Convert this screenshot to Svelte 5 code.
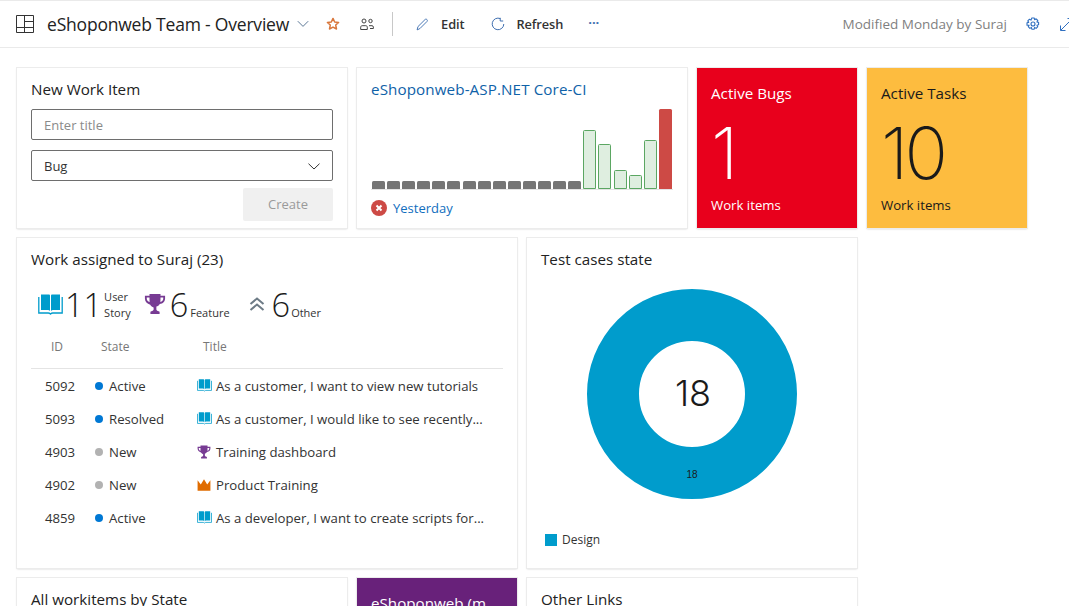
<script>
  const builds = [8, 8, 8, 8, 8, 8, 8, 8, 8, 8, 8, 8, 8, 8, 59, 45, 19, 14, 49, 80];

  function buildClass(i) {
    if (i < 14) return 'grey';
    if (i === 19) return 'red';
    return 'green';
  }

  const rows = [
    { id: 5092, state: 'Active', kind: 'story', title: 'As a customer, I want to view new tutorials' },
    { id: 5093, state: 'Resolved', kind: 'story', title: 'As a customer, I would like to see recently...' },
    { id: 4903, state: 'New', kind: 'trophy', title: 'Training dashboard' },
    { id: 4902, state: 'New', kind: 'crown', title: 'Product Training' },
    { id: 4859, state: 'Active', kind: 'story', title: 'As a developer, I want to create scripts for...' }
  ];
</script>

{#snippet book(size)}
  <svg width={size} height={size * 0.84} viewBox="0 0 25 21">
    <path d="M3 .5h7.800c.8 0 1.200.5 1.200 1.200V17c-.5-.6-1.100-1-2-1H3z" fill="#009ccc" />
    <path d="M22 .5h-7.800c-.8 0-1.200.5-1.200 1.200V17c.5-.6 1.100-1 2-1h7z" fill="#009ccc" />
    <path d="M.8 3v16h9.400c.9 0 1.600.3 2.300 1 .7-.7 1.400-1 2.300-1h9.400V3" fill="none" stroke="#009ccc" stroke-width="1.300" />
  </svg>
{/snippet}

{#snippet trophy(size)}
  <svg width={size} height={size} viewBox="0 0 24 24">
    <path d="M6 1h12v2h5v3c0 3.400-2.400 5.600-5.800 5.900-.9 1.500-2.200 2.500-3.700 2.900V18c0 .8 1 1.500 2.500 2l1 .5V23H7v-2.500l1-.5c1.500-.5 2.500-1.200 2.500-2v-2.200c-1.500-.4-2.800-1.400-3.700-2.900C3.400 11.600 1 9.400 1 6V3h5zM3 5v1c0 2 1.200 3.400 3.200 3.800C6 8.700 6 7.600 6 5zm15 0c0 2.600 0 3.700-.2 4.800C19.800 9.400 21 8 21 6V5z" fill="#773b93" fill-rule="evenodd" />
  </svg>
{/snippet}

{#snippet crown(size)}
  <svg width={size} height={size} viewBox="0 0 24 24">
    <path d="M1 4l5.500 7L12 2l5.500 9L23 4v18H1z" fill="#e06c00" />
  </svg>
{/snippet}

<div class="page">
  <header class="toolbar">
    <svg class="board" width="18" height="18" viewBox="0 0 18 18" fill="none" stroke="#333" stroke-width="1">
      <path d="M.5.5h17v17H.5zM.5 12.500h17M8.500.5v17M8.500 6.500h9" />
    </svg>
    <h1>eShoponweb Team - Overview</h1>
    <svg class="title-caret" width="12" height="8" viewBox="0 0 12 8" fill="none" stroke="#5c7896" stroke-width="1">
      <path d="M.8 1.200L6 6.400l5.200-5.200" />
    </svg>
    <svg class="star" width="14" height="14" viewBox="0 0 16 16" fill="none" stroke="#d9773c" stroke-width="1.700">
      <path d="M8 1.600l1.900 4.100 4.500.5-3.300 3 .9 4.500L8 11.500l-4 2.200.9-4.500-3.300-3 4.500-.5z" stroke-linejoin="round" />
    </svg>
    <svg class="team" width="14" height="13" viewBox="0 0 14 13" fill="none" stroke="#444" stroke-width="1">
      <circle cx="4" cy="3" r="2" /><circle cx="10.500" cy="3" r="1.700" />
      <path d="M.7 11.500V9.200c0-.9.7-1.500 1.500-1.500h3.600c.9 0 1.500.6 1.500 1.500v2.300zM9 7.700h3c.8 0 1.400.6 1.400 1.400v1.400H10" />
    </svg>
    <span class="divider"></span>
    <button class="action">
      <svg width="13" height="13" viewBox="0 0 14 14" fill="none" stroke="#3f6fb0" stroke-width="1">
        <path d="M1.200 12.800l.9-3.500 7.600-7.600c.6-.6 1.500-.6 2.100 0s.6 1.500 0 2.100l-7.600 7.600z" />
      </svg>
      Edit
    </button>
    <button class="action refresh">
      <svg width="14" height="14" viewBox="0 0 14 14" fill="none" stroke="#3f6fb0" stroke-width="1">
        <path d="M9.300 1.600a5.800 5.800 0 1 0 3.500 5.400M9.200 .8v3.200h3" />
      </svg>
      Refresh
    </button>
    <span class="more">···</span>
    <span class="modified">Modified Monday by Suraj</span>
    <svg class="gear" width="14" height="14" viewBox="0 0 14 14" fill="none" stroke="#2f6fc0" stroke-width="1.100">
      <circle cx="7" cy="7" r="2" />
      <path d="M5.800 1h2.400l.4 1.700 1.500-.9 1.700 1.700-.9 1.500 1.700.4v2.400l-1.700.4.9 1.500-1.700 1.700-1.500-.9-.4 1.700H5.800l-.4-1.700-1.500.9-1.700-1.700.9-1.500L1 8.200V5.800l1.700-.4-.9-1.500 1.700-1.700 1.500.9z" stroke-linejoin="round" />
    </svg>
    <svg class="expand" width="13" height="13" viewBox="0 0 13 13" fill="none" stroke="#2f6fc0" stroke-width="1">
      <path d="M7.500.5h5v5M12.500.5L.8 12.200M.5 7.500v5h5" />
    </svg>
  </header>

  <main class="grid">
    <section class="card new-item">
      <h2>New Work Item</h2>
      <div class="field placeholder">Enter title</div>
      <div class="field select">
        Bug
        <svg width="12" height="7" viewBox="0 0 12 7" fill="none" stroke="#333" stroke-width="1">
          <path d="M.5.7L6 6l5.500-5.300" />
        </svg>
      </div>
      <div class="create">Create</div>
    </section>

    <section class="card build">
      <h2 class="link">eShoponweb-ASP.NET Core-CI</h2>
      <div class="chart">
        {#each builds as h, i}
          <span class="bar {buildClass(i)}" style="height: {h}px"></span>
        {/each}
      </div>
      <div class="when">
        <svg width="16" height="16" viewBox="0 0 16 16">
          <circle cx="8" cy="8" r="8" fill="#cd4a45" />
          <path d="M5.500 5.500l5 5M10.500 5.500l-5 5" stroke="#fff" stroke-width="2" />
        </svg>
        <span>Yesterday</span>
      </div>
    </section>

    <section class="tile bugs">
      <h2>Active Bugs</h2>
      <div class="count">1</div>
      <div class="tile-label">Work items</div>
    </section>

    <section class="tile tasks">
      <h2>Active Tasks</h2>
      <div class="count">10</div>
      <div class="tile-label">Work items</div>
    </section>

    <section class="card assigned">
      <h2>Work assigned to Suraj (23)</h2>
      <div class="summary">
        <div class="stat story-stat">
          {@render book(25)}
          <span class="num">11</span>
          <span class="stat-label">User<br />Story</span>
        </div>
        <div class="stat feature-stat">
          {@render trophy(22)}
          <span class="num">6</span>
          <span class="stat-label">Feature</span>
        </div>
        <div class="stat other-stat">
          <svg width="16" height="14" viewBox="0 0 16 14" fill="none" stroke="#6d7b86" stroke-width="2">
            <path d="M1.500 7L8 1.500 14.500 7M1.500 13L8 7.500l6.500 5.500" />
          </svg>
          <span class="num">6</span>
          <span class="stat-label">Other</span>
        </div>
      </div>
      <div class="row head">
        <span class="c-id">ID</span>
        <span class="c-state">State</span>
        <span class="c-title">Title</span>
      </div>
      <div class="rows">
        {#each rows as r}
          <div class="row">
            <span class="c-id">{r.id}</span>
            <span class="c-state">
              <i class="dot" class:blue={r.state !== 'New'}></i>{r.state}
            </span>
            <span class="c-title">
              <span class="wi-icon">
                {#if r.kind === 'story'}
                  {@render book(15)}
                {:else if r.kind === 'trophy'}
                  {@render trophy(14)}
                {:else}
                  {@render crown(14)}
                {/if}
              </span>
              {r.title}
            </span>
          </div>
        {/each}
      </div>
    </section>

    <section class="card cases">
      <h2>Test cases state</h2>
      <div class="donut">
        <svg width="210" height="210" viewBox="0 0 210 210">
          <circle cx="105" cy="105" r="79" fill="none" stroke="#009ccc" stroke-width="52" />
        </svg>
        <span class="total">18</span>
        <span class="slice">18</span>
      </div>
      <div class="legend"><i></i>Design</div>
    </section>

    <section class="card short"><h2>All workitems by State</h2></section>
    <section class="tile purple"><h2>eShoponweb (m</h2></section>
    <section class="card short"><h2>Other Links</h2></section>
  </main>
</div>

<style>
  :global(body) {
    background: #fff;
    overflow: hidden;
  }

  .page {
    height: 606px;
    overflow: hidden;
    font-family: "Open Sans", "Noto Sans", sans-serif;
    color: #201f1e;
    border-top: 1px solid #eaeaea;
    box-sizing: border-box;
  }

  .toolbar {
    display: flex;
    align-items: center;
    height: 46px;
    padding-left: 16px;
    border-bottom: 1px solid #eaeaea;
    white-space: nowrap;
    overflow: hidden;
  }

  .board {
    flex-shrink: 0;
  }

  h1 {
    margin: 0 0 0 13px;
    font-size: 17.500px;
    font-weight: 400;
    color: #222;
    letter-spacing: -0.2px;
  }

  .title-caret {
    margin-left: 8px;
    flex-shrink: 0;
  }

  .star {
    margin-left: 17px;
    flex-shrink: 0;
  }

  .team {
    margin-left: 20px;
    flex-shrink: 0;
  }

  .divider {
    width: 1px;
    height: 24px;
    background: #c8c8c8;
    margin-left: 18px;
    flex-shrink: 0;
  }

  .action {
    display: flex;
    align-items: center;
    gap: 12px;
    margin-left: 23px;
    padding: 0;
    border: 0;
    background: none;
    font: 600 12.800px "Open Sans", sans-serif;
    color: #333;
    letter-spacing: -0.1px;
  }

  .refresh {
    margin-left: 27px;
    gap: 11px;
  }

  .more {
    margin-left: 25px;
    color: #3f6fb0;
    font-size: 13px;
    font-weight: 700;
    line-height: 1;
    margin-bottom: 3px;
  }

  .modified {
    margin-left: auto;
    font-size: 13.500px;
    color: #7f7f7f;
  }

  .gear {
    margin-left: 19px;
    flex-shrink: 0;
  }

  .expand {
    margin-left: 20px;
    margin-right: -4px;
    flex-shrink: 0;
  }

  .grid {
    display: grid;
    grid-template-columns: repeat(6, 160px);
    grid-auto-rows: 160px;
    gap: 10px;
    padding: 20px 0 0 17px;
  }

  .card,
  .tile {
    box-sizing: border-box;
    box-shadow: 0 0 0 1px #ececec, 0 1px 2px rgba(0, 0, 0, 0.2);
    min-width: 0;
  }

  .card {
    background: #fff;
    padding: 12px 14px;
  }

  h2 {
    margin: 0;
    font-size: 15.200px;
    font-weight: 400;
    line-height: 19px;
    color: #222;
  }

  .new-item,
  .build,
  .short {
    grid-column: span 2;
  }

  .field {
    box-sizing: border-box;
    height: 31px;
    margin-top: 10px;
    padding: 1px 12px 0;
    border: 1px solid #6e6e6e;
    border-radius: 2px;
    font-size: 13px;
    line-height: 28px;
    color: #333;
  }

  .field + .field {
    margin-top: 10px;
  }

  .placeholder {
    color: #8a8a8a;
  }

  .select {
    display: flex;
    justify-content: space-between;
    align-items: center;
  }

  .create {
    width: 90px;
    height: 33px;
    margin: 7px 0 0 auto;
    background: #f0f0f0;
    border-radius: 2px;
    color: #9a9a9a;
    font-size: 13px;
    font-weight: 500;
    line-height: 33px;
    text-align: center;
  }

  .link {
    color: #0f62a8;
    letter-spacing: 0.1px;
  }

  .when span {
    color: #106ebe;
  }

  .chart {
    display: flex;
    align-items: flex-end;
    gap: 2.100px;
    height: 80px;
    margin-top: 10px;
    padding-left: 1px;
    border-bottom: 1px solid #e4e4e4;
    width: 301px;
    box-sizing: content-box;
  }

  .bar {
    box-sizing: border-box;
    width: 13px;
    border-radius: 1.500px 1.500px 0 0;
    flex-shrink: 0;
  }

  .bar.grey {
    background: #757575;
  }

  .bar.green {
    background: #dfeee0;
    border: 1px solid #5ba662;
  }

  .bar.red {
    background: #cd4a45;
  }

  .when {
    display: flex;
    align-items: center;
    gap: 6px;
    margin-top: 9px;
    font-size: 13px;
  }

  .tile {
    padding: 16px 14px;
    color: #fff;
    display: flex;
    flex-direction: column;
  }

  .tile h2 {
    color: inherit;
  }

  .bugs {
    background: #e8001c;
  }

  .tasks {
    background: #fdbc3f;
    color: #1a1a1a;
  }

  .purple {
    background: #68217a;
  }

  .count {
    font-family: Inter, "Open Sans", sans-serif;
    font-size: 72px;
    font-weight: 200;
    line-height: 70px;
    margin-top: 15px;
    letter-spacing: -4px;
  }

  .tile-label {
    font-size: 13.200px;
    line-height: 18px;
    margin-top: 8px;
  }

  .assigned {
    grid-column: span 3;
    grid-row: span 2;
  }

  .cases {
    grid-column: span 2;
    grid-row: span 2;
    position: relative;
  }

  .summary {
    display: flex;
    align-items: center;
    margin-top: 15px;
    height: 40px;
    padding-left: 7px;
  }

  .stat {
    display: flex;
    align-items: center;
  }

  .feature-stat {
    margin-left: 13px;
  }

  .other-stat {
    margin-left: 19px;
  }

  .num {
    font-size: 32.500px;
    font-weight: 300;
    line-height: 36px;
    color: #1a1a1a;
    margin-left: 2px;
    position: relative;
    top: 1px;
  }

  .feature-stat .num {
    margin-left: 4px;
  }

  .other-stat .num {
    margin-left: 7px;
  }

  .stat-label {
    font-size: 11px;
    line-height: 16px;
    margin: 0 0 1px 2px;
    align-self: flex-end;
    color: #333;
  }

  .other-stat .stat-label {
    margin-left: 1px;
  }

  .row {
    display: flex;
    align-items: center;
    height: 33px;
    font-size: 13.200px;
    color: #333;
    white-space: nowrap;
  }

  .head {
    margin-top: 6px;
    padding-bottom: 5px;
    border-bottom: 1px solid #e4e4e4;
    font-size: 12px;
    color: #777;
    width: 472px;
  }

  .head .c-id {
    padding-left: 20px;
    width: 70px;
  }

  .c-id {
    box-sizing: border-box;
    width: 64px;
    padding-left: 14px;
    flex-shrink: 0;
  }

  .c-state {
    display: flex;
    align-items: center;
    width: 102px;
    flex-shrink: 0;
  }

  .c-title {
    display: flex;
    align-items: center;
  }

  .wi-icon {
    display: flex;
    width: 19px;
    flex-shrink: 0;
  }

  .dot {
    width: 8px;
    height: 8px;
    border-radius: 50%;
    background: #b2b2b2;
    margin-right: 6px;
  }

  .dot.blue {
    background: #0078d4;
  }

  .donut {
    position: relative;
    width: 210px;
    height: 210px;
    margin: 20px 0 0 46px;
  }

  .donut svg {
    display: block;
  }

  .total {
    position: absolute;
    left: 2px;
    right: 0;
    top: 80px;
    text-align: center;
    font-family: Inter, "Open Sans", sans-serif;
    font-size: 36px;
    font-weight: 300;
    line-height: 48px;
    color: #1a1a1a;
  }

  .slice {
    position: absolute;
    left: 0;
    right: 0;
    top: 179px;
    text-align: center;
    font: 10px/14px "Liberation Sans", sans-serif;
    color: #1a1a1a;
  }

  .legend {
    display: flex;
    align-items: center;
    gap: 5px;
    margin: 32px 0 0 4px;
    font-size: 12px;
    color: #333;
  }

  .legend i {
    width: 12px;
    height: 12px;
    background: #009ccc;
  }
</style>
